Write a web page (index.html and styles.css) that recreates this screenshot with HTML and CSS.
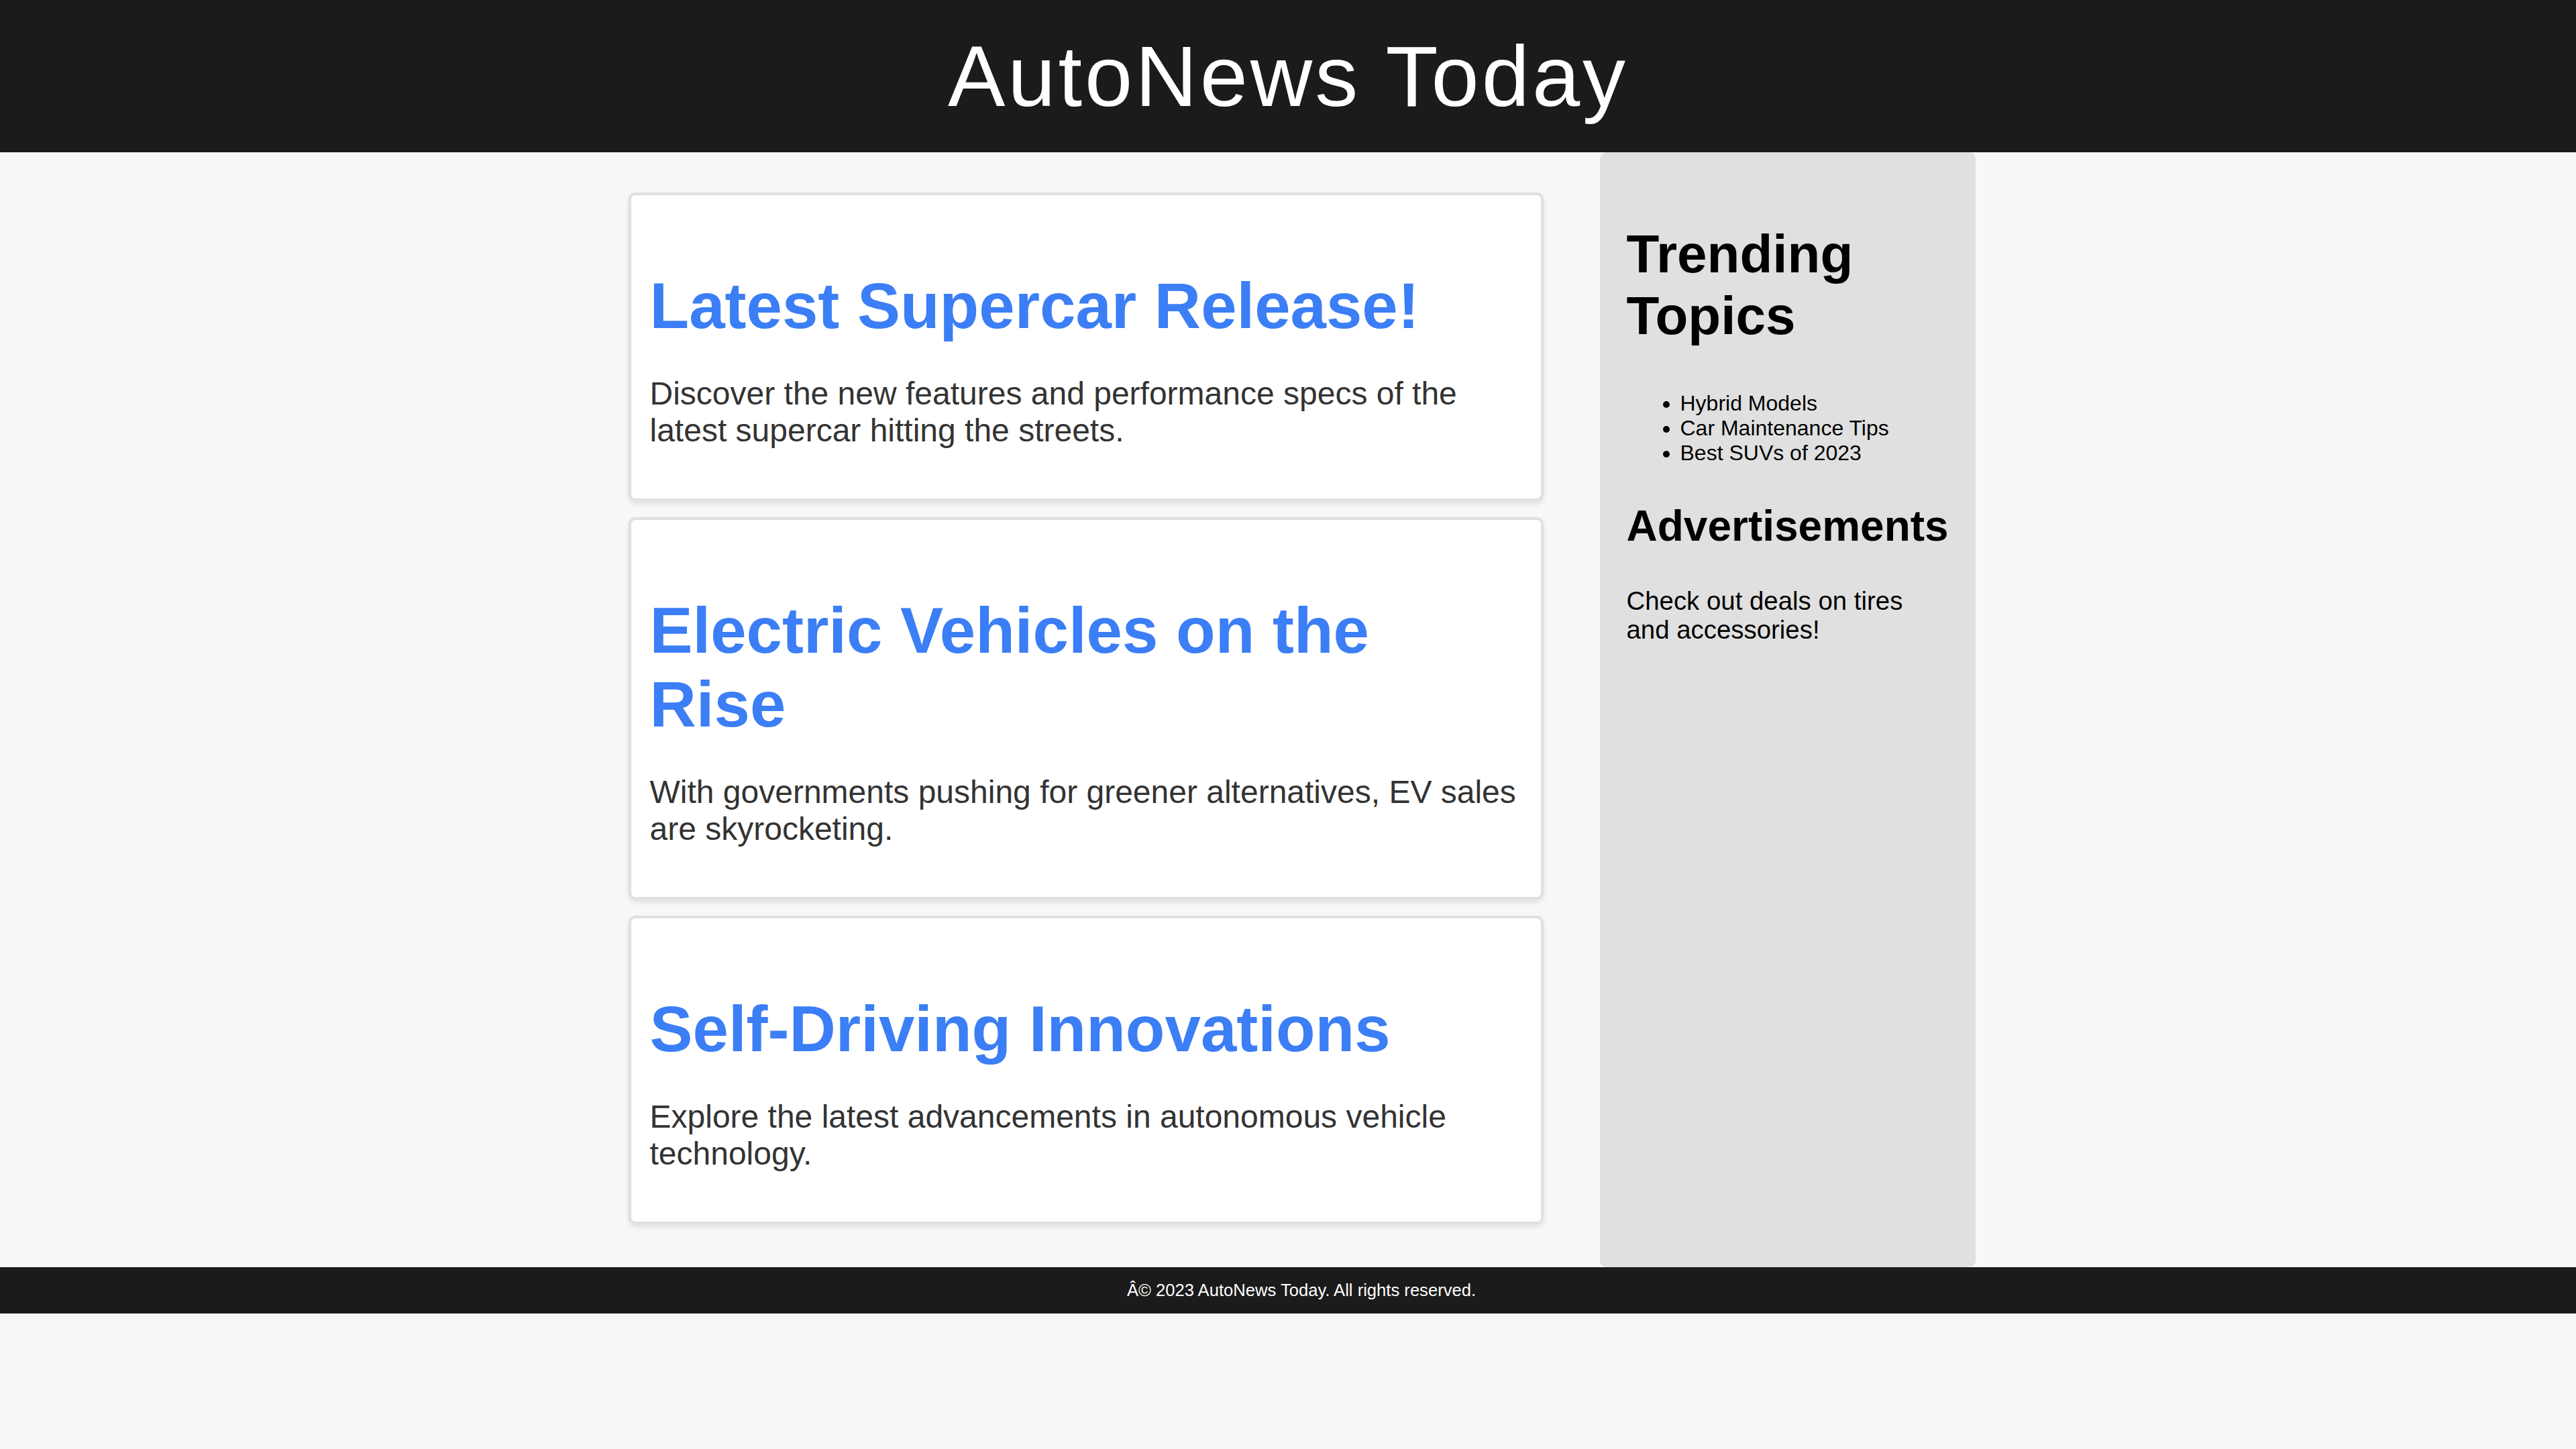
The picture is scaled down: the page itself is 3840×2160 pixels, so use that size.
FILE: index.html
```html
<!DOCTYPE html>
<html lang="en">
<head>
<meta charset="utf-8">
<title>AutoNews Today</title>
<link rel="stylesheet" href="styles.css">
</head>
<body>
<header class="site-header">
  <h1 class="site-title">AutoNews Today</h1>
</header>
<div class="layout">
  <main class="articles">
    <article class="card">
      <h2 class="card-title">Latest Supercar Release!</h2>
      <p class="card-text">Discover the new features and performance specs of the latest supercar hitting the streets.</p>
    </article>
    <article class="card">
      <h2 class="card-title">Electric Vehicles on the Rise</h2>
      <p class="card-text">With governments pushing for greener alternatives, EV sales are skyrocketing.</p>
    </article>
    <article class="card">
      <h2 class="card-title">Self-Driving Innovations</h2>
      <p class="card-text">Explore the latest advancements in autonomous vehicle technology.</p>
    </article>
  </main>
  <aside class="sidebar">
    <h2 class="side-title">Trending Topics</h2>
    <ul class="topic-list">
      <li>Hybrid Models</li>
      <li>Car Maintenance Tips</li>
      <li>Best SUVs of 2023</li>
    </ul>
    <h3 class="side-subtitle">Advertisements</h3>
    <p class="side-text">Check out deals on tires and accessories!</p>
  </aside>
</div>
<footer class="site-footer">
  <p class="footer-text">Â© 2023 AutoNews Today. All rights reserved.</p>
</footer>
</body>
</html>
```
FILE: styles.css
```css
html, body {
  margin: 0;
  padding: 0;
}
body {
  background: #f8f8f8;
  font-family: "Liberation Sans", Arial, Helvetica, sans-serif;
  color: #000;
}
.site-header {
  background: #1b1b1b;
  padding: 40px 0;
  text-align: center;
}
.site-title {
  margin: 0;
  color: #fff;
  font-size: 128px;
  font-weight: normal;
  letter-spacing: 4px;
  line-height: normal;
}
.layout {
  display: flex;
  justify-content: center;
  align-items: stretch;
  gap: 84px;
  padding-left: 41px;
}
.articles {
  width: 1364px;
  padding: 60px 0 40px;
  box-sizing: border-box;
}
.card {
  background: #fff;
  border: 4px solid #e0e0e0;
  border-radius: 10px;
  padding: 30px 28px 26px;
  margin-bottom: 24px;
  box-shadow: 0 4px 8px rgba(0, 0, 0, 0.1);
}
.card-title {
  margin: 80px 0 48px;
  font-size: 96px;
  font-weight: bold;
  color: #3b7ef5;
  line-height: normal;
}
.card-text {
  margin: 48px 0;
  font-size: 48px;
  color: #333;
  line-height: normal;
}
.sidebar {
  width: 560px;
  box-sizing: border-box;
  padding: 40px;
  background: #e0e0e0;
  border-radius: 10px;
}
.side-title {
  margin: 66px 0;
  font-size: 80px;
  font-weight: bold;
  line-height: normal;
}
.topic-list {
  margin: 32px 0;
  padding-left: 80px;
  font-size: 32px;
  line-height: normal;
}
.side-subtitle {
  margin: 53px 0;
  font-size: 64px;
  font-weight: bold;
  line-height: normal;
}
.side-text {
  margin: 38px 0;
  font-size: 38.4px;
  line-height: 43px;
}
.site-footer {
  background: #1b1b1b;
  padding: 20px 0 20px 40px;
  text-align: center;
}
.footer-text {
  margin: 0;
  color: #fff;
  font-size: 25.6px;
  line-height: normal;
}
```
